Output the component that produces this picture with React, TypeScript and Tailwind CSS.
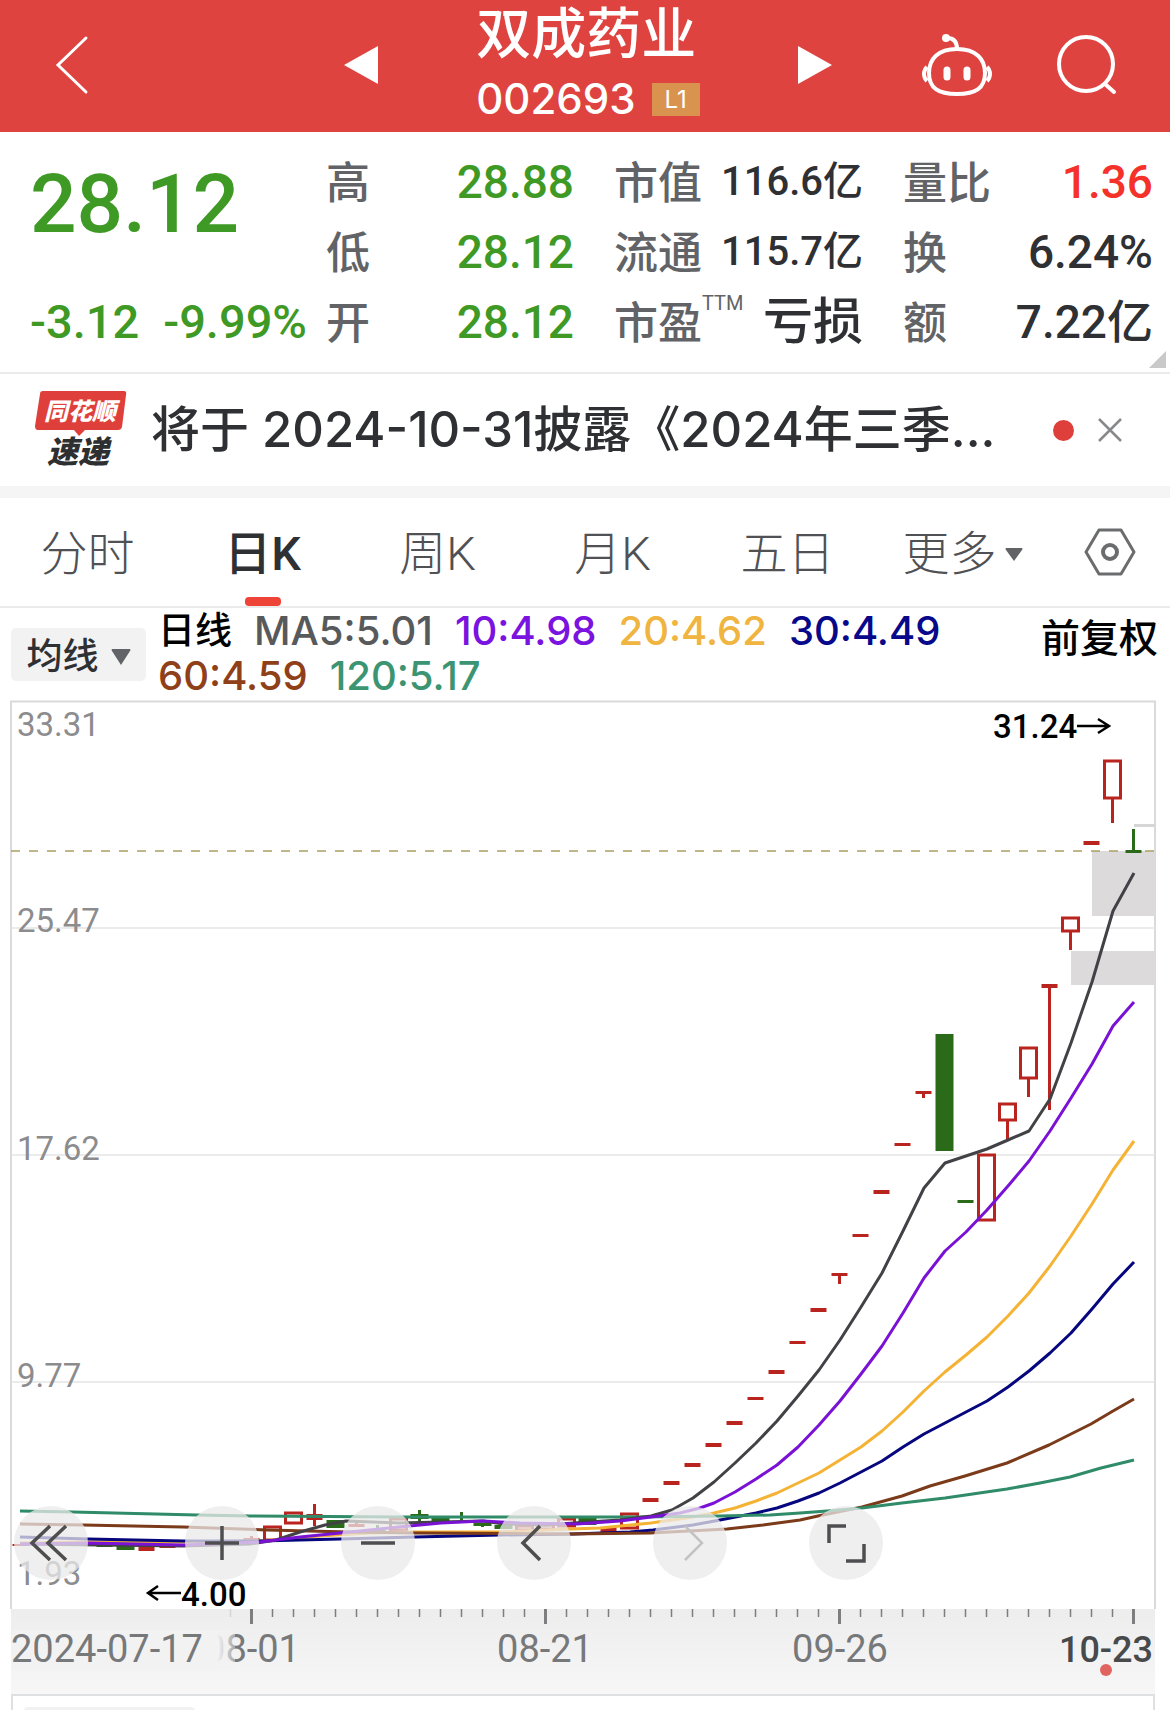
import { useState } from 'react';

type Stat = {
  label: string;
  value: string;
  tone?: string;
  note?: string;
};

type Candle = {
  i: number;
  top: number;
  bottom: number;
  high?: number;
  low?: number;
  kind: 'up' | 'down' | 'flat' | 'flatDown';
};

const prices: Stat[] = [
  { label: '高', value: '28.88', tone: 'text-[#3f9a25]' },
  { label: '低', value: '28.12', tone: 'text-[#3f9a25]' },
  { label: '开', value: '28.12', tone: 'text-[#3f9a25]' },
];

const caps: Stat[] = [
  { label: '市值', value: '116.6亿' },
  { label: '流通', value: '115.7亿' },
  { label: '市盈', value: '亏损', note: 'TTM' },
];

const volumes: Stat[] = [
  { label: '量比', value: '1.36', tone: 'text-[#f5322a]' },
  { label: '换', value: '6.24%' },
  { label: '额', value: '7.22亿' },
];

const periods = ['分时', '日K', '周K', '月K', '五日'];

const UP = '#b9251e';
const DOWN = '#2a6a18';

// Chart space: one bar every 21 units, the first one at 20.5
const barX = (i: number) => 20.5 + 21 * i;

const candles: Candle[] = [
  { i: 0, top: 1544, bottom: 1546, kind: 'flat' },
  { i: 1, top: 1543, bottom: 1545, kind: 'flat' },
  { i: 2, top: 1543, bottom: 1545, kind: 'flat' },
  { i: 3, top: 1544, bottom: 1546, kind: 'flat' },
  { i: 4, top: 1546, bottom: 1547, kind: 'flatDown' },
  { i: 5, top: 1544, bottom: 1550, kind: 'down' },
  { i: 6, top: 1547, bottom: 1551, kind: 'flat' },
  { i: 7, top: 1546, bottom: 1548, kind: 'flat' },
  { i: 8, top: 1545, bottom: 1547, kind: 'flat' },
  { i: 9, top: 1542, bottom: 1545, kind: 'flatDown' },
  { i: 10, top: 1541, bottom: 1543, kind: 'flat' },
  { i: 11, top: 1538, bottom: 1543, high: 1536, low: 1543, kind: 'flat' },
  { i: 12, top: 1527, bottom: 1540, kind: 'up' },
  { i: 13, top: 1513, bottom: 1523, kind: 'up' },
  { i: 14, top: 1514, bottom: 1520, high: 1504, low: 1526, kind: 'flat' },
  { i: 15, top: 1520, bottom: 1528, kind: 'down' },
  { i: 16, top: 1524, bottom: 1527, high: 1521, low: 1527, kind: 'flat' },
  { i: 17, top: 1530, bottom: 1532, high: 1525, low: 1532, kind: 'flatDown' },
  { i: 18, top: 1519, bottom: 1530, kind: 'up' },
  { i: 19, top: 1514, bottom: 1519, high: 1510, low: 1522, kind: 'down' },
  { i: 20, top: 1516, bottom: 1521, high: 1516, low: 1523, kind: 'down' },
  { i: 21, top: 1516, bottom: 1518, high: 1512, low: 1521, kind: 'down' },
  { i: 22, top: 1523, bottom: 1526, high: 1523, low: 1527, kind: 'down' },
  { i: 23, top: 1525, bottom: 1529, kind: 'down' },
  { i: 24, top: 1526, bottom: 1530, kind: 'up' },
  { i: 25, top: 1525, bottom: 1529, kind: 'up' },
  { i: 26, top: 1519, bottom: 1526, kind: 'up' },
  { i: 27, top: 1518, bottom: 1525, kind: 'down' },
  { i: 28, top: 1527, bottom: 1533, kind: 'flat' },
  { i: 29, top: 1514, bottom: 1528, kind: 'up' },
  { i: 30, top: 1498, bottom: 1502, kind: 'flat' },
  { i: 31, top: 1481, bottom: 1485, kind: 'flat' },
  { i: 32, top: 1463, bottom: 1467, kind: 'flat' },
  { i: 33, top: 1443, bottom: 1447, kind: 'flat' },
  { i: 34, top: 1421, bottom: 1425, kind: 'flat' },
  { i: 35, top: 1397, bottom: 1400, kind: 'flat' },
  { i: 36, top: 1370, bottom: 1374, kind: 'flat' },
  { i: 37, top: 1341, bottom: 1344, kind: 'flat' },
  { i: 38, top: 1308, bottom: 1312, kind: 'flat' },
  { i: 39, top: 1273, bottom: 1276, high: 1274, low: 1284, kind: 'flat' },
  { i: 40, top: 1234, bottom: 1237, kind: 'flat' },
  { i: 41, top: 1190, bottom: 1194, kind: 'flat' },
  { i: 42, top: 1143, bottom: 1146, kind: 'flat' },
  { i: 43, top: 1091, bottom: 1094, high: 1092, low: 1098, kind: 'flat' },
  { i: 44, top: 1034, bottom: 1151, kind: 'down' },
  { i: 45, top: 1200, bottom: 1203, kind: 'flatDown' },
  { i: 46, top: 1155, bottom: 1220, kind: 'up' },
  { i: 47, top: 1104, bottom: 1120, low: 1140, kind: 'up' },
  { i: 48, top: 1048, bottom: 1078, low: 1097, kind: 'up' },
  { i: 49, top: 984, bottom: 988, high: 986, low: 1110, kind: 'flat' },
  { i: 50, top: 918, bottom: 931, low: 950, kind: 'up' },
  { i: 51, top: 841, bottom: 845, kind: 'flat' },
  { i: 52, top: 761, bottom: 798, low: 823, kind: 'up' },
  { i: 53, top: 850, bottom: 853, high: 829, low: 851, kind: 'flatDown' },
];

const averages = [
  {
    color: '#f5b335',
    points:
      '20,1543 88,1542 183,1542 260,1541 320,1536 370,1533 415,1532 500,1532 570,1529 600,1528 651,1523 672,1520 693,1517 714,1513 735,1508 756,1501 777,1493 798,1483 819,1473 840,1460 861,1447 882,1431 903,1412 924,1391 945,1372 966,1355 987,1337 1008,1316 1029,1293 1050,1266 1071,1236 1092,1204 1113,1170 1134,1141',
  },
  {
    color: '#06067e',
    points:
      '20,1537 88,1539 183,1541 260,1541 340,1539 415,1537 500,1535 573,1534 630,1532 653,1530 693,1525 720,1520 756,1513 777,1508 798,1501 819,1493 840,1483 861,1472 882,1461 903,1447 924,1434 945,1423 966,1412 987,1401 1008,1387 1029,1371 1050,1353 1071,1333 1092,1309 1113,1284 1134,1262',
  },
  {
    color: '#7b3a19',
    points:
      '20,1524 83,1525 183,1527 267,1530 350,1532 415,1533 570,1534 650,1533 727,1529 763,1525 800,1520 818,1516 862,1507 902,1496 930,1486 965,1476 1007,1463 1049,1445 1091,1424 1113,1411 1134,1399',
  },
  {
    color: '#2f8b68',
    points:
      '20,1511 73,1512 197,1515 250,1516 400,1517 640,1517 720,1516 770,1515 800,1513 827,1511 862,1508 902,1503 945,1498 1007,1489 1040,1483 1070,1477 1101,1468 1134,1460',
  },
  {
    color: '#424246',
    points:
      '20,1544 100,1545 183,1546 250,1544 276,1540 300,1532 325,1525 346,1521 399,1523 441,1522 483,1521 504,1524 546,1525 588,1522 620,1520 651,1516 672,1510 693,1498 714,1482 735,1463 756,1443 777,1421 798,1396 819,1370 840,1340 861,1307 882,1273 903,1231 924,1188 945,1163 966,1156 987,1149 1008,1140 1029,1131 1050,1099 1071,1043 1092,982 1113,911 1134,873',
  },
  {
    color: '#7a12d6',
    points:
      '20,1544 88,1543 183,1545 260,1542 300,1537 340,1533 399,1527 441,1523 483,1521 520,1523 577,1524 620,1521 651,1517 680,1513 700,1508 714,1503 735,1492 756,1479 777,1465 798,1447 819,1425 840,1401 861,1374 882,1346 903,1313 924,1278 945,1251 966,1232 987,1210 1008,1186 1029,1161 1050,1131 1071,1098 1092,1064 1113,1026 1134,1002',
  },
];

const priceLabels = [
  { y: 736, text: '33.31' },
  { y: 932, text: '25.47' },
  { y: 1160, text: '17.62' },
  { y: 1387, text: '9.77' },
  { y: 1585, text: '1.93' },
];

const ticks = Array.from({ length: 44 }, (_, n) => n + 10);

const BackIcon = () => (
  <svg width="35" height="60" viewBox="0 0 35 60" fill="none" aria-hidden="true">
    <path d="M31 3 3 30l28 27" stroke="#fff" strokeWidth="3" strokeLinecap="round" />
  </svg>
);

const RobotIcon = () => (
  <svg width="72" height="66" viewBox="0 0 72 66" fill="none" stroke="#fff" aria-hidden="true">
    <path d="M26 6c6 0 10 3 10 11" strokeWidth="4" />
    <circle cx="25" cy="6" r="4" fill="#fff" stroke="none" />
    <path
      d="M36 17C17 17 8 27 8 41c0 15 9 21 28 21s28-6 28-21c0-14-9-24-28-24Z"
      strokeWidth="4"
    />
    <path d="M6 35c-2 2-3 4-3 7s1 5 3 7M66 35c2 2 3 4 3 7s-1 5-3 7" strokeWidth="4" />
    <path d="M26 38v7M46 38v7" strokeWidth="7" strokeLinecap="round" />
  </svg>
);

const SearchIcon = () => (
  <svg width="60" height="60" viewBox="0 0 60 60" fill="none" stroke="#fff" aria-hidden="true">
    <circle cx="29" cy="29" r="27" strokeWidth="4" />
    <path d="m48 49 9 8" strokeWidth="4" strokeLinecap="round" />
  </svg>
);

const HexIcon = () => (
  <svg width="52" height="48" viewBox="0 0 52 48" fill="none" stroke="#6b6c6e" aria-hidden="true">
    <path d="M15 2h22l13 22-13 22H15L2 24Z" strokeWidth="3" strokeLinejoin="round" />
    <circle cx="26" cy="24" r="7" strokeWidth="4" />
  </svg>
);

const ExpressLogo = () => (
  <svg
    width="92"
    height="78"
    viewBox="0 0 92 78"
    className="overflow-visible"
    aria-label="同花顺速递"
    role="img"
  >
    <path d="M8 0h81q3 0 2 4l-4 32q-1 3-4 3H50l-6 6-5-6H3q-3 0-3-4L5 3q0-3 3-3Z" fill="#df3f3b" />
    <g
      fontFamily="'Noto Sans CJK SC', sans-serif"
      fontWeight="900"
      fontStyle="italic"
      textAnchor="middle"
    >
      <text x="45" y="29" fontSize="24" fill="#fff">
        同花顺
      </text>
      <text x="43" y="72" fontSize="31" fill="#2e2f31">
        速递
      </text>
    </g>
  </svg>
);

const StatColumn = ({ items, size }: { items: Stat[]; size: string }) => (
  <dl>
    {items.map(({ label, value, tone, note }) => (
      <div key={label} className="flex h-[70px] items-center justify-between whitespace-nowrap">
        <dt className="flex pt-1 text-[44px] leading-[66px] font-medium text-[#626366]">
          {label}
          {note && <sup className="text-[20px] leading-[44px] font-normal">{note}</sup>}
        </dt>
        <dd className={`${note ? 'text-[50px]' : size} font-medium ${tone ?? 'text-[#2f3033]'}`}>
          {value}
        </dd>
      </div>
    ))}
  </dl>
);

const CandleBar = ({ candle }: { candle: Candle }) => {
  const { i, top, bottom, high, low, kind } = candle;
  const x = barX(i);
  const color = kind === 'up' || kind === 'flat' ? UP : DOWN;
  const half = kind === 'down' ? 9 : 8;

  return (
    <g>
      {(high || low) && (
        <line x1={x} x2={x} y1={high ?? bottom} y2={low ?? top} stroke={color} strokeWidth="3" />
      )}
      {kind === 'up' ? (
        <rect
          x={x - 8}
          y={top}
          width="16"
          height={bottom - top}
          fill="#fff"
          stroke={color}
          strokeWidth="3"
        />
      ) : (
        <rect x={x - half} y={top} width={half * 2} height={bottom - top} fill={color} />
      )}
    </g>
  );
};

const Chart = () => (
  <svg
    viewBox="0 700 1170 994"
    className="block h-auto w-full font-[Roboto,sans-serif]"
    role="img"
    aria-label="日K"
  >
    <defs>
      <linearGradient id="axis" x1="0" x2="0" y1="0" y2="1">
        <stop offset="0" stopColor="#ededee" />
        <stop offset="1" stopColor="#f7f7f7" />
      </linearGradient>
      <linearGradient id="fade" x1="0" x2="1" y1="0" y2="0">
        <stop offset="0.92" stopColor="#f2f2f2" />
        <stop offset="1" stopColor="#f2f2f2" stopOpacity="0.4" />
      </linearGradient>
    </defs>
    <rect x="11" y="1609" width="1144" height="85" fill="url(#axis)" />
    <path d="M11 1609V701.5H1155V1609" fill="none" stroke="#d9dadb" strokeWidth="2" />
    {[928, 1155, 1382].map((y) => (
      <line key={y} x1="11" x2="1155" y1={y} y2={y} stroke="#e4e4e5" strokeWidth="1.5" />
    ))}
    <rect x="1092" y="851" width="63" height="65" fill="#dcdadb" />
    <rect x="1071" y="951" width="84" height="34" fill="#dcdadb" />
    <rect x="1134" y="824" width="21" height="3" fill="#d6d6d6" />
    <line
      x1="11"
      x2="1155"
      y1="851"
      y2="851"
      stroke="#aba061"
      strokeWidth="1.5"
      strokeDasharray="9 9"
    />
    <g fontSize="33" fill="#8c8c8e">
      {priceLabels.map(({ y, text }) => (
        <text key={text} x="17" y={y}>
          {text}
        </text>
      ))}
    </g>
    {candles.map((candle) => (
      <CandleBar key={candle.i} candle={candle} />
    ))}
    {averages.map(({ color, points }) => (
      <polyline
        key={color}
        points={points}
        fill="none"
        stroke={color}
        strokeWidth="3"
        strokeLinejoin="round"
      />
    ))}
    <g fontSize="33" fontWeight="500" fill="#000">
      <text x="993" y="738">
        31.24
      </text>
      <text x="181" y="1606">
        4.00
      </text>
    </g>
    <path
      d="M1077 726h32m-11-7 11 7-11 7M181 1593h-32m9-7-10 7 10 7"
      fill="none"
      stroke="#000"
      strokeWidth="2.5"
    />
    {ticks.map((i) => {
      const major = (53 - i) % 14 === 0;
      return (
        <line
          key={i}
          x1={barX(i)}
          x2={barX(i)}
          y1="1609"
          y2={major ? 1624 : 1617}
          stroke={i === 10 ? '#d4d4d4' : '#7e7e80'}
          strokeWidth={major ? 3 : 1.5}
        />
      );
    })}
    <g fontSize="38" fill="#77787a">
      <text x="252" y="1662" textAnchor="middle">
        08-01
      </text>
      <rect x="11" y="1630" width="224" height="40" fill="url(#fade)" />
      <text x="11" y="1662">
        2024-07-17
      </text>
      <text x="545" y="1662" textAnchor="middle">
        08-21
      </text>
      <text x="840" y="1662" textAnchor="middle">
        09-26
      </text>
      <text x="1153" y="1662" textAnchor="end" fill="#48494b" fontSize="36" fontWeight="500">
        10-23
      </text>
    </g>
    <circle cx="1106" cy="1670" r="6" fill="#e2645f" />
  </svg>
);

const ToolButton = ({ label, path, muted }: { label: string; path: string; muted?: boolean }) => (
  <button
    type="button"
    aria-label={label}
    disabled={muted}
    className="flex size-[74px] items-center justify-center rounded-full bg-[#ebe9ea]/75"
  >
    <svg width="74" height="74" viewBox="0 0 74 74" fill="none" aria-hidden="true">
      <path d={path} stroke={muted ? '#c4c3c4' : '#4e4e50'} strokeWidth={muted ? 2.5 : 3.5} />
    </svg>
  </button>
);

export default function App() {
  const [period, setPeriod] = useState('日K');
  const [showNews, setShowNews] = useState(true);

  return (
    <main className="min-h-screen overflow-hidden bg-white font-[Roboto,'Noto_Sans_CJK_SC',sans-serif]">
      <header className="grid h-[132px] grid-cols-[344fr_488fr_338fr] items-center bg-[#de4340] text-white">
        <div className="pb-1 pl-[55px]">
          <button type="button" aria-label="返回" className="block">
            <BackIcon />
          </button>
        </div>
        <div className="flex items-center justify-between">
          <button type="button" aria-label="上一只" className="pb-1">
            <svg width="34" height="38" viewBox="0 0 34 38" aria-hidden="true">
              <path d="M34 0v38L0 19Z" fill="#fff" />
            </svg>
          </button>
          <div className="flex flex-col pb-1">
            <h1 className="text-[55px] leading-[68px] font-medium">双成药业</h1>
            <div className="flex items-center gap-4 font-[Inter,sans-serif]">
              <span className="text-[42px] leading-[62px] font-medium">002693</span>
              <span className="bg-[#d9934f] px-[13px] text-[24px] leading-[33px]">L1</span>
            </div>
          </div>
          <button type="button" aria-label="下一只" className="pb-1">
            <svg width="34" height="38" viewBox="0 0 34 38" aria-hidden="true">
              <path d="M0 0v38l34-19Z" fill="#fff" />
            </svg>
          </button>
        </div>
        <div className="flex items-center justify-end gap-16 pr-[53px] pb-1">
          <button type="button" aria-label="智能助手">
            <RobotIcon />
          </button>
          <button type="button" aria-label="搜索">
            <SearchIcon />
          </button>
        </div>
      </header>

      <section className="relative grid grid-cols-[256fr_248fr_249fr_250fr] gap-10 border-b-2 border-[#ebebec] pt-[15px] pr-[17px] pb-[15px] pl-[30px]">
        <div className="flex min-w-0 flex-col justify-between whitespace-nowrap text-[#3f9a25]">
          <strong className="text-[82px] leading-[114px] font-medium">28.12</strong>
          <p className="flex gap-6 text-[47px] leading-[70px] font-medium">
            <span>-3.12</span>
            <span>-9.99%</span>
          </p>
        </div>
        <StatColumn items={prices} size="text-[46px]" />
        <StatColumn items={caps} size="text-[40px]" />
        <StatColumn items={volumes} size="text-[46px]" />
        <svg
          width="17"
          height="17"
          viewBox="0 0 17 17"
          className="absolute right-1 bottom-1"
          aria-hidden="true"
        >
          <path d="M17 0v17H0Z" fill="#c9c9ca" />
        </svg>
      </section>

      {showNews && (
        <section className="flex h-[112px] items-center pr-12 pl-[35px]">
          <ExpressLogo />
          <a
            href="#news"
            className="ml-6 min-w-0 flex-1 truncate font-[Inter,'Noto_Sans_CJK_SC',sans-serif] text-[49px] leading-[72px] font-medium text-[#2f3033]"
          >
            将于 2024-10-31披露《2024年三季...
          </a>
          <span className="mr-6 size-[21px] rounded-full bg-[#df3f3b]" />
          <button type="button" aria-label="关闭" onClick={() => setShowNews(false)}>
            <svg width="24" height="24" viewBox="0 0 24 24" aria-hidden="true">
              <path d="m1 1 22 22M23 1 1 23" stroke="#88898b" strokeWidth="2.5" />
            </svg>
          </button>
        </section>
      )}
      <div className="h-3 bg-[#f5f5f5]" />

      <nav className="grid h-[110px] grid-cols-[repeat(6,175fr)_120fr] border-b-2 border-[#ebebec]">
        {periods.map((name) => (
          <button
            key={name}
            type="button"
            onClick={() => setPeriod(name)}
            className={`relative pt-1 text-[47px] ${
              period === name ? 'font-medium text-[#2f3033]' : 'font-light text-[#505154]'
            }`}
          >
            {name}
            {period === name && (
              <span className="absolute bottom-0 left-1/2 h-[9px] w-9 -translate-x-1/2 rounded-[4px] bg-[#ee4438]" />
            )}
          </button>
        ))}
        <button
          type="button"
          className="flex items-center justify-center gap-2 pt-1 text-[47px] font-light text-[#505154]"
        >
          更多
          <svg width="18" height="13" viewBox="0 0 18 13" aria-hidden="true">
            <path d="M1 0h16q1 1 0 2L9 13 1 2Q0 1 1 0Z" fill="#626366" />
          </svg>
        </button>
        <button type="button" aria-label="设置" className="flex items-center justify-center">
          <HexIcon />
        </button>
      </nav>

      <section className="flex h-[92px] pr-3 pl-[11px]">
        <button
          type="button"
          className="mt-5 flex h-[53px] w-[135px] items-center justify-center gap-3 rounded-[5px] bg-[#f2f2f3] pt-1 text-[36px] font-medium text-[#2f3033]"
        >
          均线
          <svg width="20" height="16" viewBox="0 0 20 16" aria-hidden="true">
            <path d="M1 0h18q1 1 0 2l-9 14L1 2Q0 1 1 0Z" fill="#626366" />
          </svg>
        </button>
        <div className="ml-3 font-[Inter,'Noto_Sans_CJK_SC',sans-serif] text-[40px] leading-[45px] font-medium">
          <div className="flex gap-[22px] whitespace-nowrap">
            <span className="text-[37px] text-black">日线</span>
            <span className="text-[#58595b]">MA5:5.01</span>
            <span className="text-[#7a12e0]">10:4.98</span>
            <span className="text-[#f0b440]">20:4.62</span>
            <span className="text-[#08088a]">30:4.49</span>
          </div>
          <div className="flex gap-[22px] whitespace-nowrap">
            <span className="text-[#8f4019]">60:4.59</span>
            <span className="text-[#3b9472]">120:5.17</span>
          </div>
        </div>
        <button
          type="button"
          className="mt-2 ml-auto h-[46px] text-[39px] leading-[46px] font-medium text-black"
        >
          前复权
        </button>
      </section>

      <section className="relative">
        <Chart />
        <div className="absolute bottom-[114px] left-[14px] flex gap-[97px]">
          <ToolButton label="最早" path="M36 20 18 37l18 17M52 20 34 37l18 17" />
          <div className="flex gap-[82px]">
            <ToolButton label="放大" path="M37 20v34M20 37h34" />
            <ToolButton label="缩小" path="M20 37h34" />
            <ToolButton label="左移" path="M43 20 26 37l17 17" />
            <ToolButton label="右移" path="m32 20 17 17-17 17" muted />
            <ToolButton label="全屏" path="M20 37V20h17M37 55h18V38" />
          </div>
        </div>
      </section>

      <section className="mr-[15px] ml-[11px] h-4 overflow-hidden border-2 border-b-0 border-[#dfe0e1] px-[11px] pt-[11px]">
        <div className="h-10 w-[171px] rounded bg-[#f2f2f3]" />
      </section>
    </main>
  );
}
